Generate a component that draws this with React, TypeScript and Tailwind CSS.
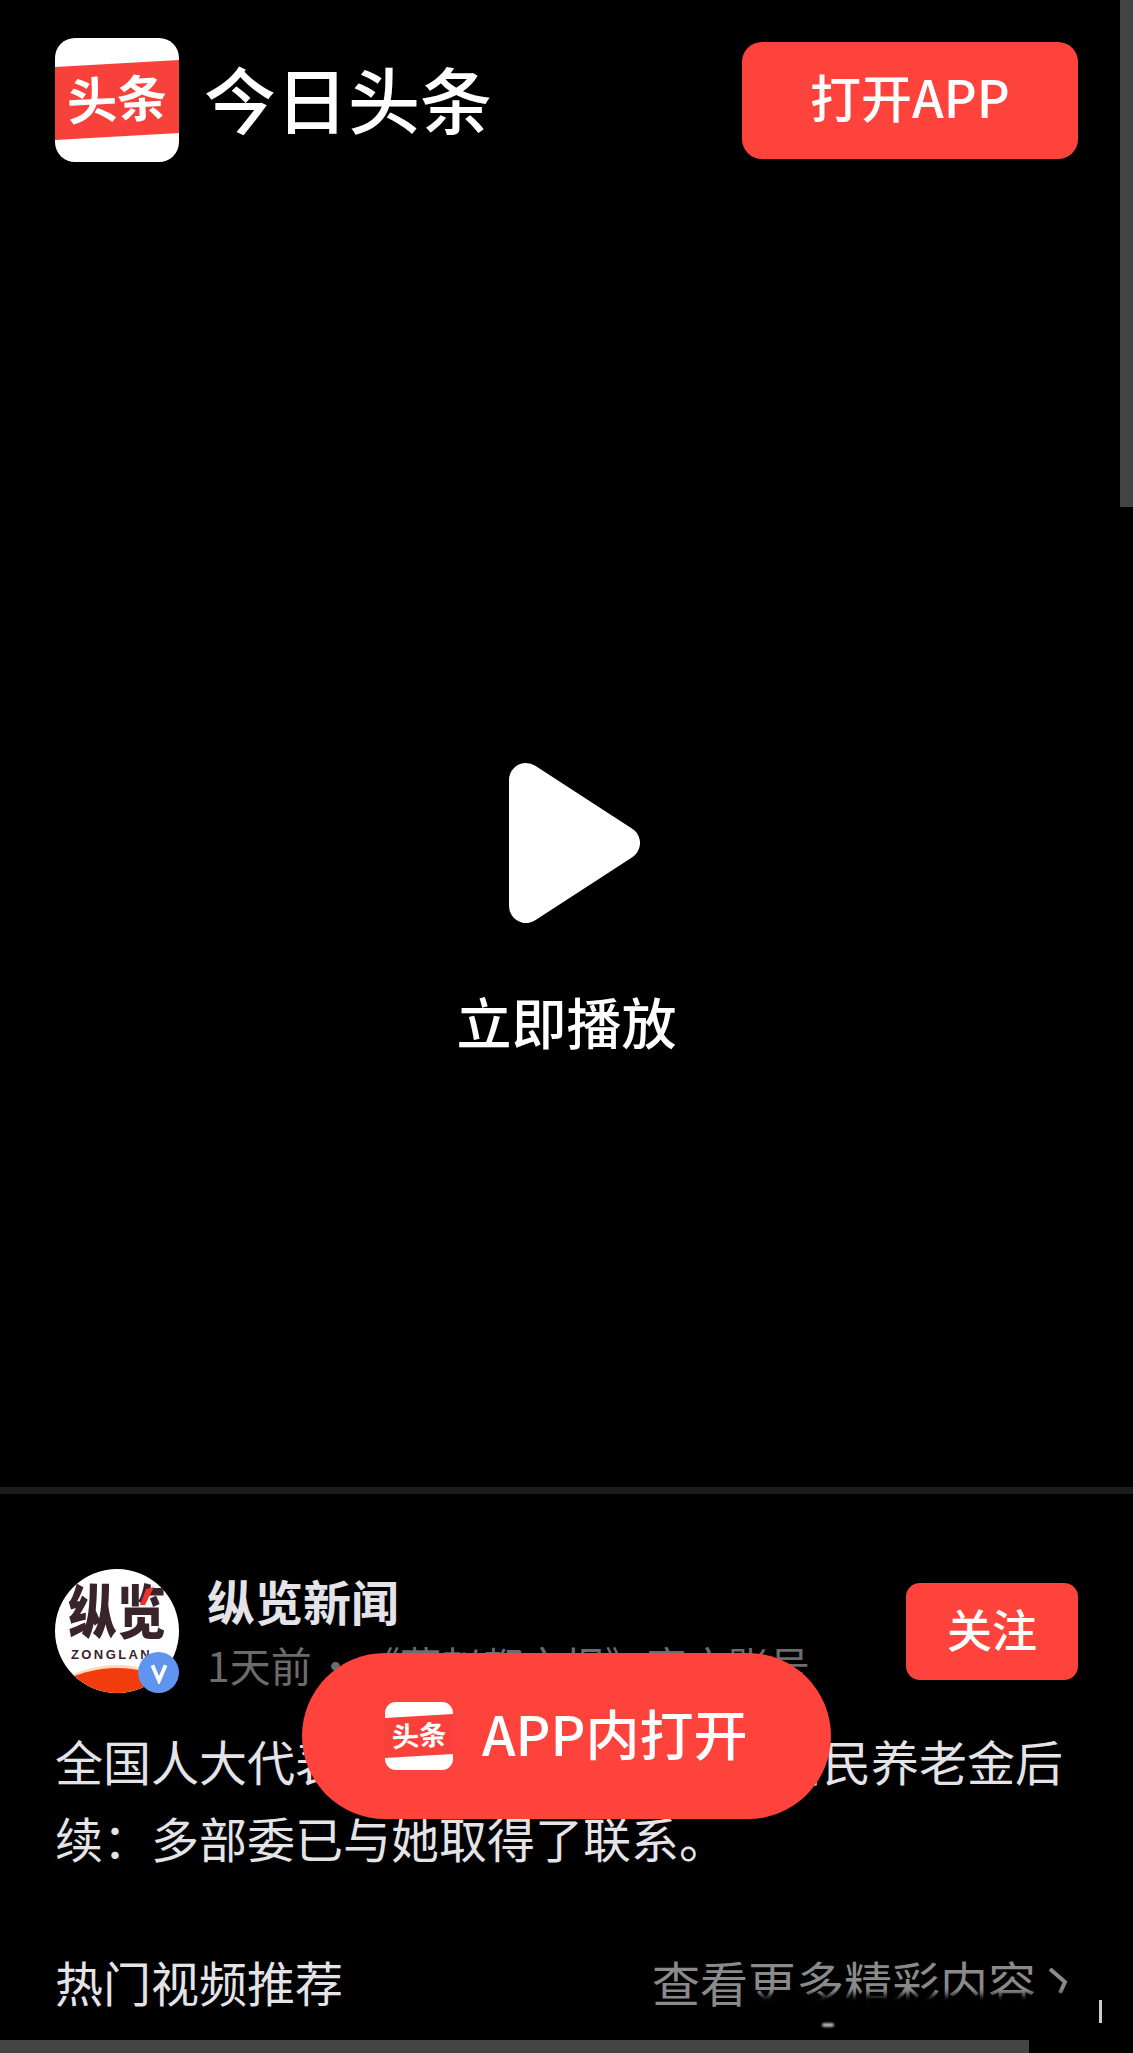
const cjk = "font-['Noto_Sans_CJK_SC','Liberation_Sans',sans-serif]";

function BrandMark({ className }: { className: string }) {
  return (
    <svg viewBox="0 0 124 124" className={className}>
      <rect width="124" height="124" rx="20" fill="#fff" />
      <polygon points="0,29 124,22 124,95 0,102" fill="#f9413b" />
      <text
        x="62"
        y="80"
        textAnchor="middle"
        fontSize="50"
        fontWeight="700"
        fill="#fff"
        transform="rotate(-3 62 62)"
        fontFamily="'Noto Sans CJK SC', sans-serif"
      >
        头条
      </text>
    </svg>
  );
}

function Avatar() {
  return (
    <div className="relative h-[124px] w-[124px] shrink-0">
      <svg viewBox="0 0 124 124" className="h-full w-full">
        <defs>
          <clipPath id="avatar-clip">
            <circle cx="62" cy="62" r="62" />
          </clipPath>
        </defs>
        <g clipPath="url(#avatar-clip)">
          <rect width="124" height="124" fill="#fff" />
          <path d="M0 114 Q62 78 124 114 V124 H0 Z" fill="#ffd9b8" />
          <path d="M0 116 Q62 82 124 116 V124 H0 Z" fill="#f23c0e" />
          <text
            x="0"
            y="0"
            textAnchor="middle"
            fontSize="48"
            fontWeight="900"
            fill="#3a242b"
            transform="translate(62 65) scale(1.02 1.22)"
            fontFamily="'Noto Sans CJK SC', sans-serif"
          >
            纵览
          </text>
          <polygon points="91,20 99,18 90,36 85,36" fill="#f0322c" />
          <text
            x="16"
            y="90"
            fontSize="13"
            fontWeight="700"
            letterSpacing="2.4"
            fill="#3a242b"
            fontFamily="'Liberation Sans', sans-serif"
          >
            ZONGLAN
          </text>
        </g>
      </svg>
      <div className="absolute bottom-0 right-0 flex h-[41px] w-[41px] items-center justify-center rounded-full bg-[#5f95ee]">
        <svg viewBox="0 0 20 20" className="h-[22px] w-[22px]">
          <polyline points="4,3 10,17 16,3" fill="none" stroke="#fff" strokeWidth="3.4" />
        </svg>
      </div>
    </div>
  );
}

export default function App() {
  return (
    <div className={`relative h-[2053px] w-[1133px] overflow-hidden bg-black ${cjk}`}>
      <header className="flex h-[200px] items-center justify-between px-[55px]">
        <div className="flex items-center gap-[25px]">
          <BrandMark className="h-[124px] w-[124px]" />
          <span className="pb-[6px] text-[72px] font-medium leading-none text-white">今日头条</span>
        </div>
        <button className="flex h-[117px] w-[336px] items-center justify-center rounded-[20px] bg-[#fd433b] pb-[8px] text-[51px] font-medium text-white">
          打开APP
        </button>
      </header>

      <section className="flex h-[1287px] flex-col items-center pt-[563px]">
        <svg viewBox="0 0 131 160" className="ml-[16px] h-[160px] w-[131px]">
          <polygon
            points="17,17 114,80 17,143"
            fill="#fff"
            stroke="#fff"
            strokeWidth="34"
            strokeLinejoin="round"
          />
        </svg>
        <p className="mt-[67px] text-[55px] font-medium leading-[60px] text-white">立即播放</p>
      </section>

      <div className="h-[7px] bg-[#1c1c1c]" />

      <section className="px-[55px] pt-[75px]">
        <div className="flex items-start">
          <Avatar />
          <div className="ml-[28px] mt-[3px]">
            <p className="text-[48px] font-bold leading-[56px] text-[#e3e3e8]">纵览新闻</p>
            <p className="mt-[11px] whitespace-nowrap text-[41px] leading-[50px] text-[#6c6c6c] [word-spacing:-6px]">
              1天前 · 《燕赵都市报》官方账号
            </p>
          </div>
          <button className="ml-auto mt-[14px] flex h-[97px] w-[172px] items-center justify-center rounded-[14px] bg-[#fd433b] pb-[6px] text-[45px] font-medium text-white">
            关注
          </button>
        </div>

        <p className="mt-[29px] text-[48px] leading-[77px] text-[#e3e3e8]">
          全国人大代表履职建议再提高农村居民养老金后续：多部委已与她取得了联系。
        </p>

        <div className="mt-[75px] flex items-center justify-between pr-[10px]">
          <span className="text-[48px] leading-[60px] text-[#e3e3e8]">热门视频推荐</span>
          <span className="flex items-center text-[48px] leading-[60px] text-[#8a8a8a]">
            查看更多精彩内容
            <svg viewBox="0 0 20 26" className="ml-[12px] h-[26px] w-[20px]">
              <polyline points="2,1 17,14 12,25" fill="none" stroke="#8a8a8a" strokeWidth="4" />
            </svg>
          </span>
        </div>
      </section>

      <div className="mt-[29px] h-[13px] w-[1029px] bg-[#444444]" />

      {/* watermark smudge over the link row */}
      <div className="absolute left-[745px] top-[1995px] h-[38px] w-[365px] bg-black blur-[3px]" />
      <div className="absolute left-[822px] top-[2023px] h-[4px] w-[12px] rounded-full bg-white/70 blur-[1px]" />
      <div className="absolute left-[1099px] top-[2000px] h-[23px] w-[3px] bg-white/80" />

      <button className="absolute left-[302px] top-[1653px] flex h-[166px] w-[529px] items-center gap-[29px] rounded-[83px] bg-[#fd433b] pl-[83px] text-[54px] font-medium text-white">
        <BrandMark className="h-[68px] w-[68px]" />
        <span className="pb-[8px]">APP内打开</span>
      </button>

      <div className="absolute right-0 top-0 h-[507px] w-[13px] bg-[#444444]" />
    </div>
  );
}
